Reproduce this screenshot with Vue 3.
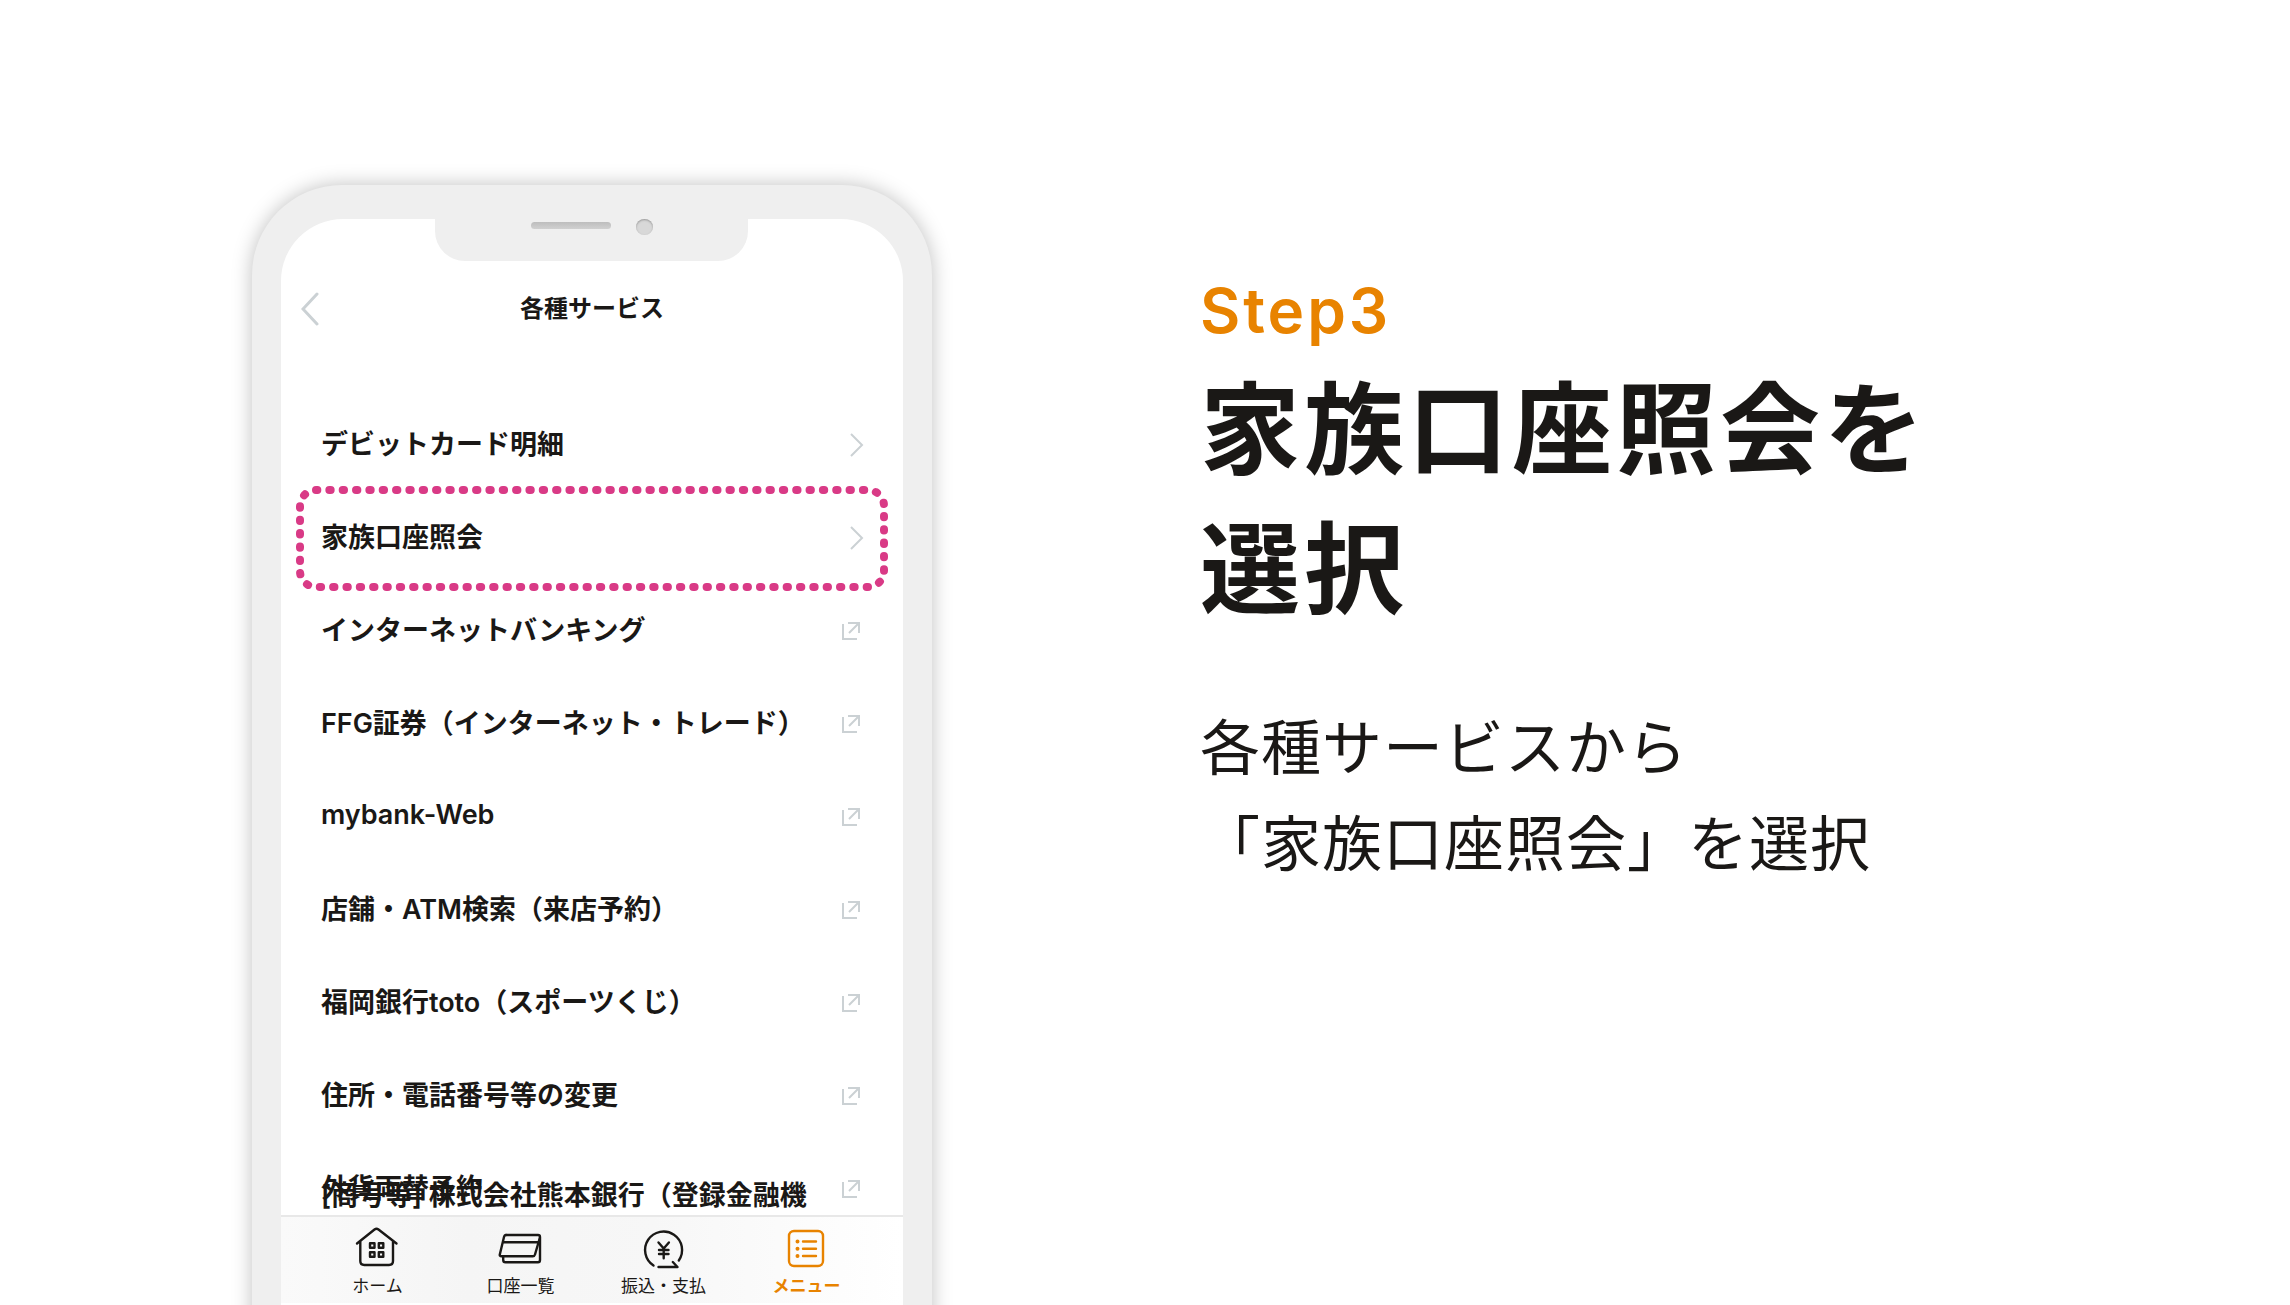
<template>
  <main class="page">
    <!-- Phone mockup -->
    <section class="phone">
      <div class="screen">
        <div class="notch">
          <span class="speaker"></span>
          <span class="camera"></span>
        </div>

        <header class="app-header">
          <button class="back" type="button" aria-label="戻る">
            <svg width="18" height="34" viewBox="0 0 18 34" fill="none" stroke="#cbd1d4" stroke-width="3" stroke-linecap="round">
              <path d="M16 2 2 17l14 15" />
            </svg>
          </button>
          <h2>各種サービス</h2>
        </header>

        <ul class="services">
          <li v-for="item in services" :key="item.label">
            <a href="#">
              <span>{{ item.label }}</span>
              <svg v-if="item.external" class="external" width="20" height="20" viewBox="0 0 20 20" fill="none" stroke="#cbd1d4" stroke-width="2">
                <path d="M2 3v15h14M7 2h11v10M18 2 8 12" />
              </svg>
              <svg v-else width="14" height="24" viewBox="0 0 14 24" fill="none" stroke="#cbd1d4" stroke-width="2">
                <path d="m1 1 11 11L1 23" />
              </svg>
              <!-- Dotted highlight around the selected row -->
              <svg v-if="item.selected" class="highlight" aria-hidden="true">
                <rect x="4" y="4" rx="16" pathLength="1000" />
              </svg>
            </a>
          </li>
        </ul>

        <p class="company">[商号等] 株式会社熊本銀行（登録金融機</p>

        <nav class="tabs">
          <a href="#">
            <svg width="44" height="44" viewBox="0 0 44 44">
              <path d="M2 17.5 19.5 3.5q2-1.5 4 0L41.500 17.5M5.300 15.5V35q0 4 4 4H34q4 0 4-4V15.5" />
              <path d="M15 17.3h4.500v4.500H15zM23.800 17.3h4.500v4.500h-4.500zM15 26.3h4.500v4.500H15zM23.800 26.3h4.500v4.500h-4.500z" />
            </svg>
            <span>ホーム</span>
          </a>
          <a href="#">
            <svg width="44" height="44" viewBox="0 0 44 44">
              <path d="M8 9h32q2 0 2 2v23q0 2.300-2 2.300H7.500q-2.300 0-2.300-2.300v-3" />
              <path d="M8 9Q6.500 9 6 11L1.800 28.500q-.3 1.800 1.500 1.800h31.500q1.700 0 2.200-1.800L41.800 12M5.500 16.300H40" />
            </svg>
            <span>口座一覧</span>
          </a>
          <a href="#">
            <svg width="44" height="44" viewBox="0 0 44 44">
              <path d="M12.500 39.500A18.500 18.500 0 1 1 37.800 34.500M17.500 41h19l-4.700-5" />
              <path d="m17.500 16.500 5.200 6 5.200-6M22.700 22.500v9.800M18 24h9.500M18 28h9.500" />
            </svg>
            <span>振込・支払</span>
          </a>
          <a href="#" class="active">
            <svg width="44" height="44" viewBox="0 0 44 44">
              <rect x="5" y="5" width="34" height="35" rx="5" />
              <path d="M19 15.500h13M19 22.700h13M19 30h13" />
              <path d="M13.500 15.500v.01M13.500 22.700v.01M13.500 30v.01" class="dots" />
            </svg>
            <span>メニュー</span>
          </a>
        </nav>
      </div>
    </section>

    <!-- Step description -->
    <section class="guide">
      <p class="step">Step3</p>
      <h1>家族口座照会を<br>選択</h1>
      <p class="lead">各種サービスから<br>「家族口座照会」を選択</p>
    </section>
  </main>
</template>

<script setup>
const services = [
  { label: 'デビットカード明細' },
  { label: '家族口座照会', selected: true },
  { label: 'インターネットバンキング', external: true },
  { label: 'FFG証券（インターネット・トレード）', external: true },
  { label: 'mybank-Web', external: true },
  { label: '店舗・ATM検索（来店予約）', external: true },
  { label: '福岡銀行toto（スポーツくじ）', external: true },
  { label: '住所・電話番号等の変更', external: true },
  { label: '外貨両替予約', external: true }
]
</script>

<style>
body {
  margin: 0;
  background: #fff;
}
</style>

<style scoped>
.page {
  display: grid;
  grid-template-columns: 11% 680px 1fr;
  height: 100vh;
  overflow: hidden;
  color: #1a1816;
  font-family: Inter, 'Noto Sans CJK JP', sans-serif;
}

h1, h2, p, ul {
  margin: 0;
  padding: 0;
}

a {
  color: inherit;
  text-decoration: none;
}

.phone {
  grid-column: 2;
  box-sizing: border-box;
  height: 1400px;
  margin-top: 185px;
  padding: 34px 29px;
  border-radius: 90px;
  background: #efefef;
  box-shadow: 0 0 20px rgba(0, 0, 0, 0.25);
}

.screen {
  height: 100%;
  border-radius: 62px;
  background: #fff;
  overflow: hidden;
}

.notch {
  display: flex;
  gap: 25px;
  box-sizing: border-box;
  width: 313px;
  height: 42px;
  margin: 0 auto;
  padding-left: 96px;
  border-radius: 0 0 30px 30px;
  background: #efefef;
}

.speaker {
  width: 80px;
  height: 7px;
  margin-top: 3px;
  border-radius: 4px;
  background: linear-gradient(#bdbdbd, #d0d0d0);
}

.camera {
  box-sizing: border-box;
  width: 17px;
  height: 16px;
  border-radius: 50%;
  background: #d8d8d8;
  box-shadow: inset 0 1px 2px #999;
}

.app-header {
  display: grid;
  grid-template-columns: 56px 1fr 56px;
  align-items: center;
  height: 96px;
}

.back {
  display: flex;
  padding: 0 0 0 20px;
  border: none;
  background: none;
  cursor: pointer;
}

h2 {
  text-align: center;
  font-size: 24px;
  line-height: 36px;
}

.services {
  margin-top: 41px;
  list-style: none;
}

.services a {
  position: relative;
  display: flex;
  align-items: center;
  justify-content: space-between;
  height: 93px;
  padding: 0 39px 0 40px;
  font-size: 27px;
  font-weight: 600;
}

.services span {
  padding-bottom: 4px;
}

.external {
  margin-right: 3px;
}

.highlight {
  position: absolute;
  top: -5px;
  left: 15px;
  width: calc(100% - 30px);
  height: 105px;
}

.highlight rect {
  width: calc(100% - 8px);
  height: 97px;
  fill: none;
  stroke: #d93a86;
  stroke-width: 8;
  stroke-linecap: round;
  stroke-dasharray: 1 9;
}

/* Fixed footer text that runs over the last row */
.company {
  height: 37px;
  margin-top: -57px;
  padding-left: 40px;
  font-size: 27px;
  font-weight: 600;
  line-height: 36px;
  white-space: nowrap;
}

.tabs {
  display: grid;
  grid-template-columns: repeat(4, 143px);
  justify-content: center;
  height: 86px;
  border-top: 2px solid #e8e8e8;
  background: linear-gradient(90deg, #fafafa, #f5f5f5 30%, #f7f7f7 60%, #fff);
}

.tabs a {
  display: flex;
  flex-direction: column;
  align-items: center;
  gap: 3px;
  padding-top: 9px;
  font-size: 17px;
  line-height: 26px;
}

.tabs svg {
  fill: none;
  stroke: currentColor;
  stroke-width: 2.4;
  stroke-linecap: round;
  stroke-linejoin: round;
}

.tabs .dots {
  stroke-width: 4;
}

.tabs .active {
  color: #e88300;
  font-weight: 700;
}

.guide {
  padding: 275px 0 0 268px;
}

.step {
  color: #e88300;
  font-size: 62px;
  font-weight: 600;
  line-height: 72px;
  letter-spacing: 3px;
}

h1 {
  margin-top: 13px;
  font-size: 100px;
  line-height: 140px;
  letter-spacing: 4px;
}

.lead {
  margin-top: 60px;
  font-size: 60px;
  line-height: 96px;
  letter-spacing: 1px;
}
</style>
